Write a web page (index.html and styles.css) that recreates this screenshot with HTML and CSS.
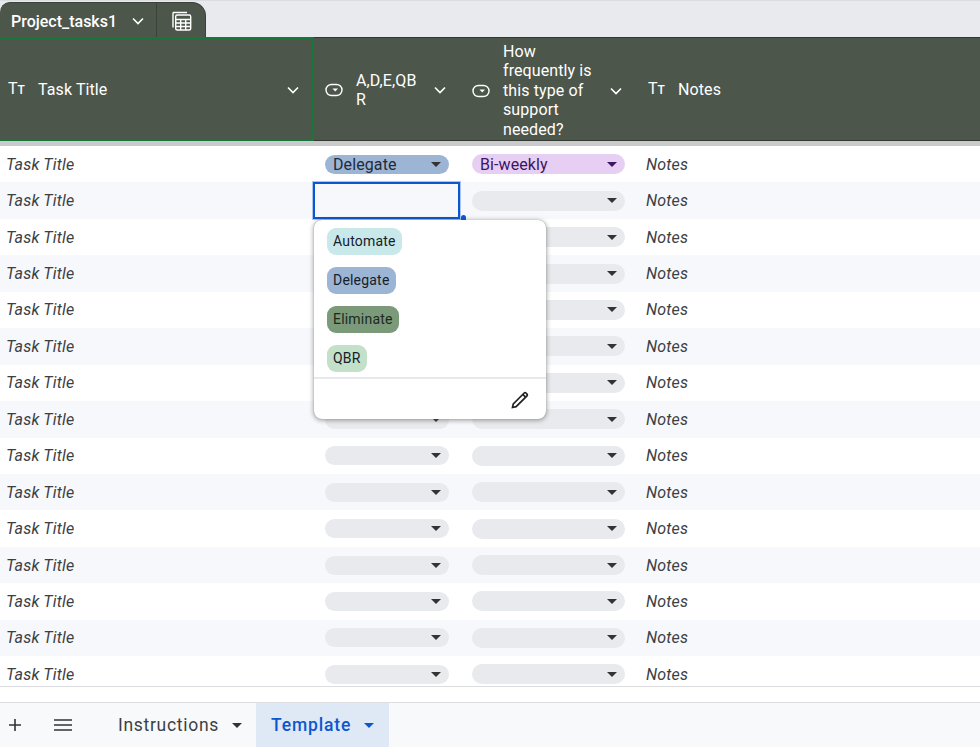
FILE: index.html
```html
<!DOCTYPE html>
<html lang="en">
  <head>
    <meta charset="utf-8" />
    <title>Project_tasks1</title>
    <link rel="stylesheet" href="styles.css">
  </head>

  <body>
    <div class="wrap">
      <div class="topbar">
        <div class="table-tab">
          <div class="table-name">
            <span>Project_tasks1</span>
            <svg class="chev" width="14" height="14" viewBox="0 0 14 14"><path d="M2 4.5 7 9.5 12 4.5" /></svg>
          </div>
          <div class="table-view">
            <svg width="22" height="22" viewBox="0 0 22 22" fill="none" stroke="#fff" stroke-width="1.4">
              <path d="M2 2.5h14M2 2.5v15" />
              <rect x="4.7" y="5" width="15" height="15" rx="1.5" />
              <path d="M4.7 9.5h15M4.7 13h15M4.7 16.5h15M9.7 9.5v10.5M14.7 9.5v10.5" />
            </svg>
          </div>
        </div>
      </div>

      <div class="head">
        <div class="hcell first">
          <span class="tt">T<small>T</small></span>
          <span class="hlabel">Task Title</span>
          <svg class="chev" width="14" height="14" viewBox="0 0 14 14"><path d="M2 4.5 7 9.5 12 4.5" /></svg>
        </div>
        <div class="hcell second">
          <svg class="chip-icon" width="18" height="14" viewBox="0 0 18 14"><rect x="1" y="1.5" width="16" height="11" rx="5.5" /><path class="fill" d="M7.5 5.5h5.5L10.2 8.5z" /></svg>
          <span class="hlabel narrow">A,D,E,QBR</span>
          <svg class="chev" width="14" height="14" viewBox="0 0 14 14"><path d="M2 4.5 7 9.5 12 4.5" /></svg>
        </div>
        <div class="hcell third">
          <svg class="chip-icon" width="18" height="14" viewBox="0 0 18 14"><rect x="1" y="1.5" width="16" height="11" rx="5.5" /><path class="fill" d="M7.5 5.5h5.5L10.2 8.5z" /></svg>
          <span class="hlabel">How frequently is this type of support needed?</span>
          <svg class="chev" width="14" height="14" viewBox="0 0 14 14"><path d="M2 4.5 7 9.5 12 4.5" /></svg>
        </div>
        <div class="hcell fourth">
          <span class="tt">T<small>T</small></span>
          <span class="hlabel">Notes</span>
        </div>
      </div>

      <div class="rows">
        <div class="row">
          <div class="c1">Task Title</div>
          <div class="c2"><div class="pill delegate"><span>Delegate</span><i class="arrow"></i></div></div>
          <div class="c3"><div class="pill biweekly"><span>Bi-weekly</span><i class="arrow"></i></div></div>
          <div class="c4">Notes</div>
        </div>
        <div class="row">
          <div class="c1">Task Title</div>
          <div class="c2 selected"></div>
          <div class="c3"><div class="pill"><i class="arrow"></i></div></div>
          <div class="c4">Notes</div>
        </div>
        <div class="row">
          <div class="c1">Task Title</div>
          <div class="c2"><div class="pill"><i class="arrow"></i></div></div>
          <div class="c3"><div class="pill"><i class="arrow"></i></div></div>
          <div class="c4">Notes</div>
        </div>
        <div class="row">
          <div class="c1">Task Title</div>
          <div class="c2"><div class="pill"><i class="arrow"></i></div></div>
          <div class="c3"><div class="pill"><i class="arrow"></i></div></div>
          <div class="c4">Notes</div>
        </div>
        <div class="row">
          <div class="c1">Task Title</div>
          <div class="c2"><div class="pill"><i class="arrow"></i></div></div>
          <div class="c3"><div class="pill"><i class="arrow"></i></div></div>
          <div class="c4">Notes</div>
        </div>
        <div class="row">
          <div class="c1">Task Title</div>
          <div class="c2"><div class="pill"><i class="arrow"></i></div></div>
          <div class="c3"><div class="pill"><i class="arrow"></i></div></div>
          <div class="c4">Notes</div>
        </div>
        <div class="row">
          <div class="c1">Task Title</div>
          <div class="c2"><div class="pill"><i class="arrow"></i></div></div>
          <div class="c3"><div class="pill"><i class="arrow"></i></div></div>
          <div class="c4">Notes</div>
        </div>
        <div class="row">
          <div class="c1">Task Title</div>
          <div class="c2"><div class="pill"><i class="arrow"></i></div></div>
          <div class="c3"><div class="pill"><i class="arrow"></i></div></div>
          <div class="c4">Notes</div>
        </div>
        <div class="row">
          <div class="c1">Task Title</div>
          <div class="c2"><div class="pill"><i class="arrow"></i></div></div>
          <div class="c3"><div class="pill"><i class="arrow"></i></div></div>
          <div class="c4">Notes</div>
        </div>
        <div class="row">
          <div class="c1">Task Title</div>
          <div class="c2"><div class="pill"><i class="arrow"></i></div></div>
          <div class="c3"><div class="pill"><i class="arrow"></i></div></div>
          <div class="c4">Notes</div>
        </div>
        <div class="row">
          <div class="c1">Task Title</div>
          <div class="c2"><div class="pill"><i class="arrow"></i></div></div>
          <div class="c3"><div class="pill"><i class="arrow"></i></div></div>
          <div class="c4">Notes</div>
        </div>
        <div class="row">
          <div class="c1">Task Title</div>
          <div class="c2"><div class="pill"><i class="arrow"></i></div></div>
          <div class="c3"><div class="pill"><i class="arrow"></i></div></div>
          <div class="c4">Notes</div>
        </div>
        <div class="row">
          <div class="c1">Task Title</div>
          <div class="c2"><div class="pill"><i class="arrow"></i></div></div>
          <div class="c3"><div class="pill"><i class="arrow"></i></div></div>
          <div class="c4">Notes</div>
        </div>
        <div class="row">
          <div class="c1">Task Title</div>
          <div class="c2"><div class="pill"><i class="arrow"></i></div></div>
          <div class="c3"><div class="pill"><i class="arrow"></i></div></div>
          <div class="c4">Notes</div>
        </div>
        <div class="row">
          <div class="c1">Task Title</div>
          <div class="c2"><div class="pill"><i class="arrow"></i></div></div>
          <div class="c3"><div class="pill"><i class="arrow"></i></div></div>
          <div class="c4">Notes</div>
        </div>
      </div>

      <div class="spacer"></div>

      <div class="sheetbar">
        <div class="bar-btn plus">
          <svg width="14" height="14" viewBox="0 0 14 14"><path d="M7 1v12M1 7h12" /></svg>
        </div>
        <div class="bar-btn menu">
          <svg width="18" height="12" viewBox="0 0 18 12"><path d="M0 1h18M0 6h18M0 11h18" /></svg>
        </div>
        <div class="sheet-tab">
          <span>Instructions</span><i class="arrow"></i>
        </div>
        <div class="sheet-tab active">
          <span>Template</span><i class="arrow"></i>
        </div>
      </div>

      <!-- dropdown over the selected cell -->
      <i class="sel-handle"></i>
      <div class="dropdown">
        <div class="options">
          <div class="option automate">Automate</div>
          <div class="option delegate">Delegate</div>
          <div class="option eliminate">Eliminate</div>
          <div class="option qbr">QBR</div>
        </div>
        <div class="drop-foot">
          <svg width="20" height="20" viewBox="0 0 20 20" fill="none" stroke="#222" stroke-width="1.7">
            <path d="M2.5 17.5l.8-3.6L14.2 3a1.2 1.2 0 0 1 1.7 0l1.1 1.1a1.2 1.2 0 0 1 0 1.7L6.1 16.7z" />
            <path d="M12.8 4.4l2.8 2.8" />
          </svg>
        </div>
      </div>
    </div>
  </body>
</html>
```

FILE: styles.css
```css
* {
  margin: 0;
  padding: 0;
  box-sizing: border-box;
}
html,
body {
  height: 100%;
  overflow: hidden;
}
body {
  font-family: Roboto, "Liberation Sans", sans-serif;
  font-size: 16px;
  letter-spacing: 0.1px;
  color: #3c4043;
  background-color: #fff;
}
.wrap {
  position: relative;
  display: flex;
  flex-direction: column;
  height: 747px;
}

/* top tab */
.topbar {
  display: flex;
  align-items: flex-end;
  height: 37px;
  background-color: #e9eaee;
  border-top: 1px solid #dcdde0;
}
.table-tab {
  display: flex;
  width: 206px;
  height: 35px;
  background-color: #4d564b;
  border-top: 1px solid #3b4239;
  border-right: 1px solid #3b4239;
  border-radius: 10px 14px 0 0;
  color: #fff;
}
.table-name {
  display: flex;
  align-items: center;
  gap: 14px;
  width: 157px;
  padding: 2px 0 0 11px;
  font-weight: 500;
  letter-spacing: 0;
  border-right: 1px solid #3b4239;
}
.table-view {
  display: flex;
  align-items: center;
  justify-content: center;
  flex: 1;
  padding: 2px 0 0 2px;
}
.chev {
  flex: none;
  fill: none;
  stroke: #fff;
  stroke-width: 1.6;
}

/* header row */
.head {
  display: flex;
  height: 109px;
  background-color: #4d564b;
  border-top: 1px solid #33392f;
  border-bottom: 5px solid #c9cacb;
  color: #fff;
  line-height: 19.5px;
}
.hcell {
  display: flex;
  align-items: center;
  padding-top: 2px;
  border-bottom: 1px solid #33392f;
}
.first {
  width: 314px;
  margin-top: -1px;
  padding: 1px 12px 0 8px;
  border: 2px solid #17763a;
  border-left: 0;
}
.first .hlabel {
  flex: 1;
  margin-left: 13px;
}
.second {
  width: 147px;
  padding-left: 11px;
  padding-right: 14px;
}
.second .hlabel {
  width: 66px;
  margin-left: 13px;
  margin-right: 12px;
  word-break: break-all;
}
.third {
  width: 174px;
  padding: 3px 12px 0 11px;
}
.third .hlabel {
  width: 92px;
  margin-left: 13px;
  margin-right: 14px;
}
.fourth {
  flex: 1;
  padding-left: 13px;
}
.fourth .hlabel {
  margin-left: 13px;
}
.tt {
  flex: none;
  width: 17px;
  font-size: 16px;
  font-weight: 400;
  letter-spacing: 0;
}
.tt small {
  font-size: 12px;
  font-weight: 500;
}
.chip-icon {
  flex: none;
  fill: none;
  stroke: #fff;
  stroke-width: 1.4;
}
.chip-icon .fill {
  fill: #fff;
  stroke: none;
}

/* rows */
.rows {
  height: 541px;
  overflow: hidden;
  border-bottom: 1px solid #dcdde0;
}
.row {
  display: flex;
  align-items: center;
  height: 36.45px;
  font-style: italic;
  letter-spacing: 0.2px;
}
.row:nth-child(even) {
  background-color: #f7f8fb;
}
.c1 {
  width: 314px;
  padding-left: 6px;
}
.c2 {
  display: flex;
  align-items: center;
  width: 147px;
  height: 100%;
  padding: 0 12px 0 11px;
}
.c3 {
  width: 174px;
  padding: 0 10px 0 11px;
}
.c4 {
  padding-left: 11px;
}
.selected {
  height: 37px;
  margin-left: -1px;
  margin-right: 1px;
  border: 2px solid #0b57d0;
  outline: 1px solid #a9c5ee;
}
.pill {
  display: flex;
  align-items: center;
  justify-content: space-between;
  width: 100%;
  height: 19px;
  padding: 0 8px;
  border-radius: 10px;
  background-color: #e9eaed;
  font-style: normal;
  letter-spacing: 0.1px;
}
.c3 .pill {
  height: 20px;
}
.pill span {
  color: #1f2a3a;
}
.pill.delegate {
  background-color: #9db5d4;
}
.pill.biweekly {
  background-color: #e6cff2;
}
.pill.biweekly span {
  color: #3d1466;
}
.pill.biweekly .arrow {
  border-top-color: #3d1466;
}
.arrow {
  flex: none;
  width: 0;
  height: 0;
  margin-left: auto;
  border-left: 5px solid transparent;
  border-right: 5px solid transparent;
  border-top: 5px solid #333;
}

/* bottom bar */
.spacer {
  height: 15px;
}
.sheetbar {
  display: flex;
  flex: 1;
  align-items: stretch;
  background-color: #f8f9fb;
  border-top: 1px solid #dcdde0;
}
.bar-btn {
  display: flex;
  align-items: center;
  justify-content: center;
}
.bar-btn svg {
  fill: none;
  stroke: #333;
  stroke-width: 1.6;
}
.plus {
  width: 30px;
}
.menu {
  width: 66px;
}
.sheet-tab {
  display: flex;
  align-items: center;
  gap: 13px;
  font-size: 17.5px;
  letter-spacing: 0.7px;
  color: #3c4043;
}
.sheet-tab .arrow {
  margin-left: 0;
}
.sheet-tab:nth-child(3) {
  width: 160px;
  padding-left: 22px;
}
.sheet-tab.active {
  padding: 0 15px;
  background-color: #dfe8f5;
  color: #0b57d0;
  font-weight: 500;
  letter-spacing: 0.85px;
}
.sheet-tab.active .arrow {
  border-top-color: #0b57d0;
}

/* dropdown */
.sel-handle {
  position: absolute;
  top: 215px;
  left: 461px;
  width: 5px;
  height: 5px;
  background-color: #0b57d0;
  border-radius: 50% 50% 0 0;
}
.dropdown {
  position: absolute;
  top: 220px;
  left: 314px;
  width: 232px;
  height: 199px;
  background-color: #fff;
  border-radius: 8px;
  box-shadow: 0 1px 4px 1px rgba(60, 64, 67, 0.4), 0 0 1px rgba(60, 64, 67, 0.5);
}
.options {
  display: flex;
  flex-direction: column;
  align-items: flex-start;
  gap: 12.5px;
  height: 159px;
  padding: 8px 0 0 13px;
  border-bottom: 2px solid #e8e9ec;
}
.option {
  padding: 0 6px;
  height: 26.5px;
  line-height: 26px;
  font-size: 14px;
  letter-spacing: 0.2px;
  color: #16202c;
  border-radius: 9px;
}
.option.automate {
  background-color: #c9e8e9;
}
.option.delegate {
  background-color: #9db5d4;
}
.option.eliminate {
  background-color: #7a9a7a;
  color: #1c2a1c;
}
.option.qbr {
  background-color: #c3e0c8;
}
.drop-foot {
  display: flex;
  justify-content: flex-end;
  padding: 11px 16px 0 0;
}
```
